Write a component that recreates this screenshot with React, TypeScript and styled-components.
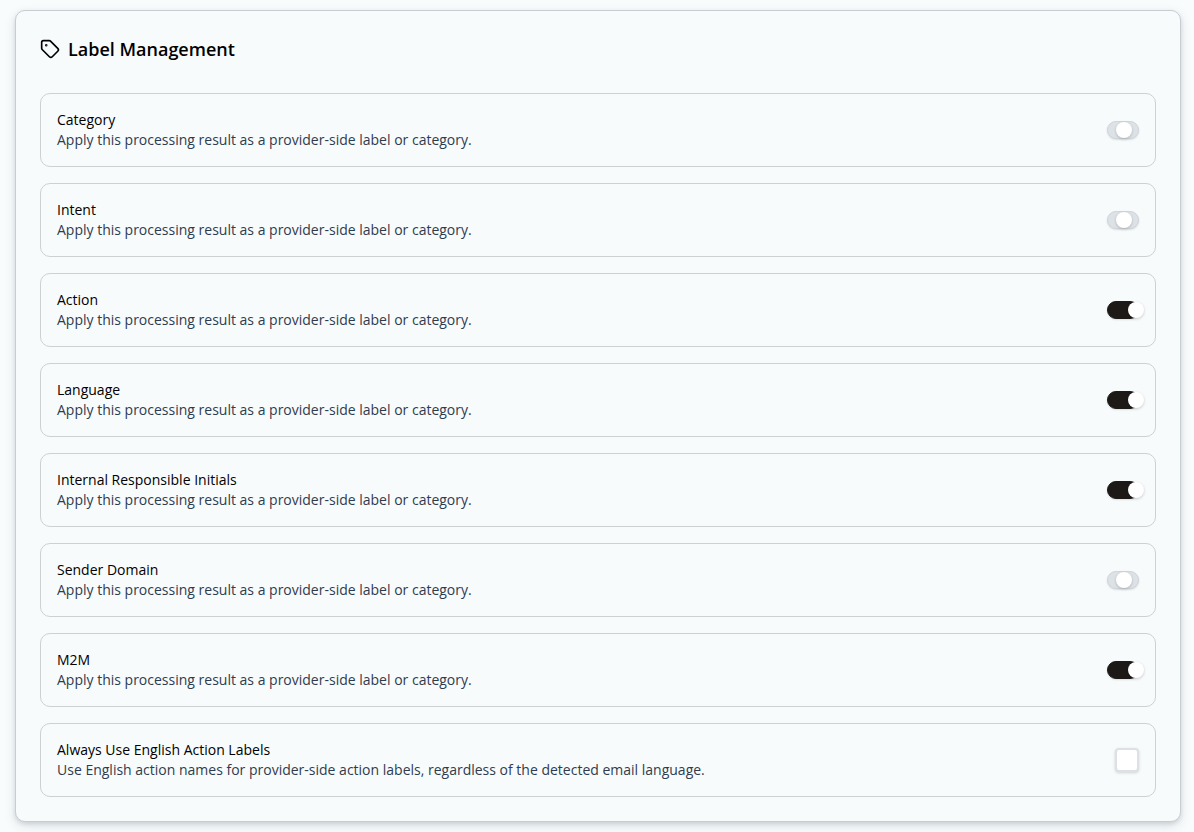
import React, { useState } from 'react';
import styled, { createGlobalStyle } from 'styled-components';
import { Tag } from 'lucide-react';

const GlobalStyle = createGlobalStyle`
  *, *::before, *::after { box-sizing: border-box; }
  body {
    margin: 0;
    background: #f8fcfd;
    color: #000;
    font-family: "Open Sans", sans-serif;
    font-size: 14px;
    line-height: 20px;
  }
`;

const Page = styled.main`
  padding: 10px 13px 10px 15px;
`;

const Card = styled.section`
  border: 1px solid #c9cdd2;
  border-radius: 10px;
  padding: 24px;
  background: #f8fbfc;
  box-shadow: 0 4px 12px rgba(29, 41, 57, 0.12), 0 2px 4px rgba(29, 41, 57, 0.12);
`;

const Heading = styled.h2`
  display: flex;
  align-items: center;
  gap: 8px;
  margin: 0 0 30px;
  font-size: 18px;
  font-weight: 600;
  line-height: 28px;
`;

const List = styled.div`
  display: grid;
  gap: 16px;
`;

const Row = styled.div`
  display: flex;
  align-items: center;
  justify-content: space-between;
  gap: 16px;
  min-height: 74px;
  padding: 16px;
  border: 1px solid #cdd1d4;
  border-radius: 10px;
`;

const Title = styled.label`
  display: block;
  font-weight: 500;
`;

const Description = styled.p`
  margin: 0;
  color: #2f3b4e;
`;

const Switch = styled.input`
  appearance: none;
  flex: none;
  display: flex;
  align-items: center;
  width: 32px;
  height: 18px;
  margin: 0;
  border: 1px solid #d0d5da;
  border-radius: 9px;
  background: #dde2e7;
  box-shadow: 0 1px 2px rgba(0, 0, 0, 0.12);

  &::before {
    content: "";
    flex: none;
    width: 16px;
    height: 16px;
    margin-left: 8px;
    border-radius: 50%;
    background: #fff;
    box-shadow: 0 1px 3px rgba(0, 0, 0, 0.2);
  }

  &:checked { border-color: #1c1917; background: #1c1917; }
  &:checked::before { margin-left: 20px; }
`;

const Checkbox = styled.input`
  appearance: none;
  flex: none;
  width: 24px;
  height: 24px;
  margin: 0;
  border: 2px solid #dbe1e6;
  border-radius: 4px;
  background: #fff;
  box-shadow: 0 1px 3px rgba(0, 0, 0, 0.16);

  &:checked { background: #1c1917; }
`;

const applyText = 'Apply this processing result as a provider-side label or category.';

const labels = [
  { id: 'category', title: 'Category', on: false },
  { id: 'intent', title: 'Intent', on: false },
  { id: 'action', title: 'Action', on: true },
  { id: 'language', title: 'Language', on: true },
  { id: 'initials', title: 'Internal Responsible Initials', on: true },
  { id: 'domain', title: 'Sender Domain', on: false },
  { id: 'm2m', title: 'M2M', on: true },
];

type SettingProps = {
  id: string;
  title: string;
  description: string;
  initial: boolean;
  kind: 'switch' | 'checkbox';
};

function Setting({ id, title, description, initial, kind }: SettingProps) {
  const [on, setOn] = useState(initial);
  const Control = kind === 'switch' ? Switch : Checkbox;
  return (
    <Row>
      <div>
        <Title htmlFor={id}>{title}</Title>
        <Description id={`${id}-description`}>{description}</Description>
      </div>
      <Control
        id={id}
        type="checkbox"
        role={kind === 'switch' ? 'switch' : undefined}
        aria-describedby={`${id}-description`}
        checked={on}
        onChange={(event: React.ChangeEvent<HTMLInputElement>) => setOn(event.target.checked)}
      />
    </Row>
  );
}

export default function App() {
  return (
    <>
      <GlobalStyle />
      <Page>
        <Card>
          <Heading><Tag size={20} aria-hidden="true" />Label Management</Heading>
          <List>
            {labels.map((label) => (
              <Setting key={label.id} id={label.id} title={label.title} description={applyText} initial={label.on} kind="switch" />
            ))}
            <Setting
              id="english"
              title="Always Use English Action Labels"
              description="Use English action names for provider-side action labels, regardless of the detected email language."
              initial={false}
              kind="checkbox"
            />
          </List>
        </Card>
      </Page>
    </>
  );
}
